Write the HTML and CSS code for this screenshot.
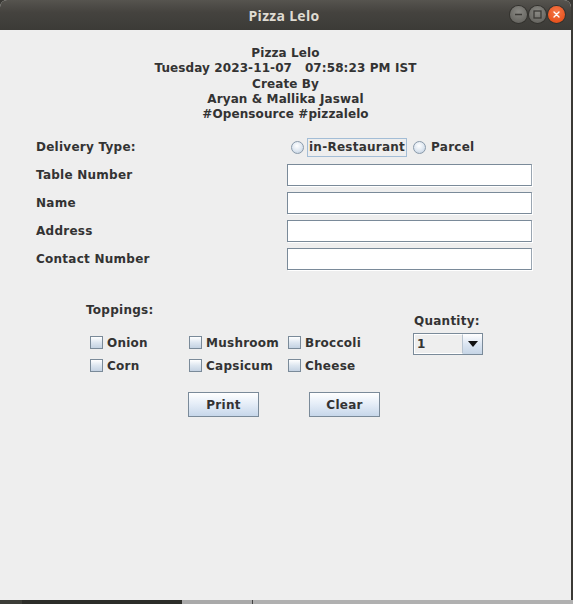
FILE: index.html
```html
<!DOCTYPE html>
<html>
<head>
<meta charset="utf-8">
<title>Pizza Lelo</title>
<link rel="stylesheet" href="styles.css">
</head>
<body>
<div class="screen">
  <div class="window">
    <div class="titlebar">
      <span class="title">Pizza Lelo</span>
      <div class="controls">
        <span class="wbtn min"><svg width="17" height="17" viewBox="0 0 17 17"><line x1="5" y1="8.5" x2="12" y2="8.5" stroke="#3c3b37" stroke-width="1.4"/></svg></span>
        <span class="wbtn max"><svg width="17" height="17" viewBox="0 0 17 17"><rect x="5" y="5" width="7" height="7" fill="none" stroke="#3c3b37" stroke-width="1.3"/></svg></span>
        <span class="wbtn close"><svg width="17" height="17" viewBox="0 0 17 17"><path d="M6 6 L11 11 M11 6 L6 11" stroke="#fff" stroke-width="1.4" stroke-linecap="round"/></svg></span>
      </div>
    </div>
    <div class="content">
      <div class="header">
        <div>Pizza Lelo</div>
        <div>Tuesday 2023-11-07&nbsp;&nbsp;&nbsp;07:58:23 PM IST</div>
        <div>Create By</div>
        <div>Aryan &amp; Mallika Jaswal</div>
        <div>#Opensource #pizzalelo</div>
      </div>

      <div class="form">
        <div class="label">Delivery Type:</div>
        <div class="delivery">
          <span class="radio"></span><span class="opt focus">in-Restaurant</span>
          <span class="radio"></span><span class="opt">Parcel</span>
        </div>
        <div class="label">Table Number</div>
        <div class="field"></div>
        <div class="label">Name</div>
        <div class="field"></div>
        <div class="label">Address</div>
        <div class="field"></div>
        <div class="label">Contact Number</div>
        <div class="field"></div>
      </div>

      <div class="extras">
        <div class="toppings">
          <div class="label">Toppings:</div>
          <div class="checks">
            <div class="check"><span class="box"></span>Onion</div>
            <div class="check"><span class="box"></span>Mushroom</div>
            <div class="check"><span class="box"></span>Broccoli</div>
            <div class="check"><span class="box"></span>Corn</div>
            <div class="check"><span class="box"></span>Capsicum</div>
            <div class="check"><span class="box"></span>Cheese</div>
          </div>
        </div>
        <div class="quantity">
          <div class="label">Quantity:</div>
          <div class="combo">
            <span class="value">1</span>
            <span class="arrow"><svg width="10" height="6" viewBox="0 0 10 6"><path d="M0 0 H10 L5 6 Z" fill="#111"/></svg></span>
          </div>
        </div>
      </div>

      <div class="actions">
        <span class="button">Print</span>
        <span class="button">Clear</span>
      </div>
    </div>
  </div>
  <div class="taskbar">
    <span class="tb dark1"></span>
    <span class="tb dark2"></span>
    <span class="tb grey1"></span>
    <span class="tb grey2"></span>
  </div>
</div>
</body>
</html>
```

FILE: styles.css
```css
* { box-sizing: border-box; }
html, body { margin: 0; padding: 0; }
body {
  width: 573px;
  height: 604px;
  background: #3a3935;
  overflow: hidden;
  font-family: "DejaVu Sans", "Liberation Sans", sans-serif;
}
.screen {
  display: flex;
  flex-direction: column;
  width: 573px;
  height: 604px;
}
.window {
  width: 571px;
  height: 600px;
  display: flex;
  flex-direction: column;
  background: #eeeeee;
  border-radius: 7px 7px 0 0;
  overflow: hidden;
}
.titlebar {
  height: 30px;
  flex: none;
  background: linear-gradient(#56544f, #45433f 40%, #3c3b37);
  display: flex;
  align-items: center;
  justify-content: center;
  position: relative;
}
.title {
  color: #dfdbd2;
  font-family: "Open Sans", "DejaVu Sans", sans-serif;
  font-weight: 700;
  font-size: 14px;
  letter-spacing: 0.3px;
  margin-right: 3px;
}
.controls {
  position: absolute;
  right: 6px;
  top: 6px;
  display: flex;
  gap: 2px;
}
.wbtn {
  width: 17px;
  height: 17px;
  border-radius: 50%;
  display: flex;
  background: radial-gradient(circle at 50% 35%, #8a8984, #6a6964 70%, #5a5955);
  box-shadow: 0 0 0 1px #33322e;
}
.wbtn.close {
  background: radial-gradient(circle at 50% 35%, #f5794b, #e9541f 70%, #d04410);
}
.content {
  flex: 1;
  padding-top: 16px;
  color: #333333;
  font-weight: 700;
  font-size: 12px;
  letter-spacing: 0.25px;
}
.header {
  text-align: center;
  line-height: 15.25px;
  padding-left: 0;
  letter-spacing: 0.1px;
}
.form {
  margin-top: 14px;
  display: grid;
  grid-template-columns: 251px 245px;
  grid-auto-rows: 22px;
  row-gap: 6px;
  padding-left: 36px;
}
.label {
  line-height: 15px;
  display: flex;
  align-items: center;
}
.form .label { height: 22px; }
.delivery {
  display: flex;
  align-items: center;
  padding-left: 4px;
}
.radio {
  width: 13px;
  height: 13px;
  border-radius: 50%;
  border: 1px solid #8a9aaa;
  background: radial-gradient(circle at 45% 35%, #ffffff, #dde6f0 55%, #b8c8da);
  margin-right: 3px;
  flex: none;
}
.opt {
  padding: 1px 1px;
  border: 1px solid transparent;
  line-height: 15px;
  margin-right: 6px;
}
.opt.focus { border-color: #a3bdd6; }
.field {
  background: #ffffff;
  border: 1px solid #7a8a99;
  border-right-color: #9aa6b2;
  box-shadow: 1px 1px 0 #ffffff;
}
.extras {
  margin-top: 33px;
  padding-left: 86px;
  display: flex;
}
.toppings { width: 327px; }
.checks {
  margin-top: 13px;
  padding-left: 4px;
  display: grid;
  grid-template-columns: 99px 99px 99px;
  grid-auto-rows: 23px;
  row-gap: 0;
}
.check {
  display: flex;
  align-items: center;
  white-space: nowrap;
}
.box {
  width: 13px;
  height: 13px;
  border: 1px solid #7a8a99;
  background: linear-gradient(#ffffff, #dde6f0 50%, #c4d2e2);
  margin-right: 4px;
  flex: none;
}
.quantity {
  padding-top: 11px;
  display: flex;
  flex-direction: column;
}
.quantity .label { padding-left: 1px; }
.combo {
  margin-top: 4px;
  width: 70px;
  height: 22px;
  border: 1px solid #7a8a99;
  display: flex;
  background: #ffffff;
}
.value {
  flex: 1;
  display: flex;
  align-items: center;
  padding-left: 2px;
  border: 1px solid #fff;
  border-right: 1px solid #b8c4d0;
  background: #eeeeee;
}
.arrow {
  width: 19px;
  display: flex;
  align-items: center;
  justify-content: center;
  background: linear-gradient(#ffffff, #dce6f2 50%, #c6d5e6);
}
.actions {
  margin-top: 15px;
  padding-left: 188px;
  display: flex;
  gap: 50px;
}
.button {
  width: 71px;
  height: 25px;
  border: 1px solid #7a8a99;
  background: linear-gradient(#ffffff, #e6eef8 45%, #c7d7ea);
  display: flex;
  align-items: center;
  justify-content: center;
}
.taskbar {
  height: 4px;
  display: flex;
}
.tb { height: 4px; display: block; }
.dark1 { width: 22px; background: #3c3d37; }
.dark2 { width: 160px; background: #2c2d29; }
.grey1 { width: 71px; background: #a9a9a9; border-right: 1px solid #444; }
.grey2 { flex: 1; background: #b0b0b0; }
```
